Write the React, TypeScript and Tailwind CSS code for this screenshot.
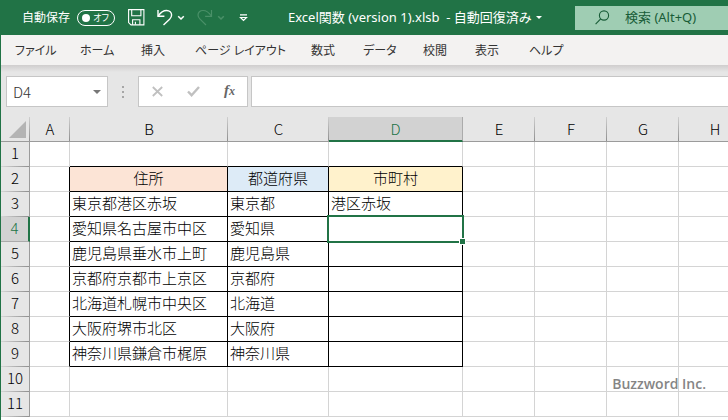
import React from "react";

const TABS = [
  { label: "ファイル", width: "w-[65px]" },
  { label: "ホーム", width: "w-[61px]" },
  { label: "挿入", width: "w-[54px]" },
  { label: "ページ レイアウト", width: "w-[116px]" },
  { label: "数式", width: "w-[52px]" },
  { label: "データ", width: "w-[60px]" },
  { label: "校閲", width: "w-[52px]" },
  { label: "表示", width: "w-[54px]" },
  { label: "ヘルプ", width: "w-[60px]" },
];

const COLUMNS = [
  { name: "A", width: "w-[40px]" },
  { name: "B", width: "w-[158px]" },
  { name: "C", width: "w-[101px]" },
  { name: "D", width: "w-[134px]" },
  { name: "E", width: "w-[72px]" },
  { name: "F", width: "w-[72px]" },
  { name: "G", width: "w-[72px]" },
  { name: "H", width: "w-[72px]" },
];

const DATA: Record<number, Record<string, string>> = {
  2: { B: "住所", C: "都道府県", D: "市町村" },
  3: { B: "東京都港区赤坂", C: "東京都", D: "港区赤坂" },
  4: { B: "愛知県名古屋市中区", C: "愛知県" },
  5: { B: "鹿児島県垂水市上町", C: "鹿児島県" },
  6: { B: "京都府京都市上京区", C: "京都府" },
  7: { B: "北海道札幌市中央区", C: "北海道" },
  8: { B: "大阪府堺市北区", C: "大阪府" },
  9: { B: "神奈川県鎌倉市梶原", C: "神奈川県" },
};

const HEADING_FILL: Record<string, string> = {
  B: "bg-[#fce4d6]",
  C: "bg-[#ddebf7]",
  D: "bg-[#fff2cc]",
};

const ROWS = [1, 2, 3, 4, 5, 6, 7, 8, 9, 10, 11];

function cellClass(row: number, col: string) {
  const inTable = "BCD".includes(col);
  const right =
    row >= 2 && row <= 9 && "ABCD".includes(col)
      ? "border-r-black"
      : "border-r-[#d4d4d4]";
  const bottom =
    inTable && row >= 1 && row <= 9 ? "border-b-black" : "border-b-[#d4d4d4]";
  const heading = row === 2 && inTable ? `text-center ${HEADING_FILL[col]}` : "";
  return `relative h-[25px] border-r border-b p-0 px-0.5 pb-0.5 leading-5 whitespace-nowrap ${right} ${bottom} ${heading}`;
}

function Chevron() {
  return (
    <svg width="8" height="6" viewBox="0 0 8 6" fill="none" stroke="currentColor" strokeWidth="1.5">
      <path d="M1.2 1.2 4 4l2.8-2.8" />
    </svg>
  );
}

function TitleBar() {
  return (
    <header className="flex h-[35px] shrink-0 items-center bg-[#217346] pl-[22px] text-xs text-white">
      <label className="flex items-center gap-[7px]">
        <span>自動保存</span>
        <input type="checkbox" role="switch" className="peer sr-only" />
        <span className="flex h-4 w-[38px] items-center justify-between rounded-full border border-white pr-[5px] pl-1">
          <span className="size-2 rounded-full bg-white" />
          <span className="text-[9px] leading-3 [font-feature-settings:'palt']">オフ</span>
        </span>
      </label>

      <button aria-label="保存" className="ml-[13px]">
        <svg width="17" height="17" viewBox="0 0 17 17" fill="none" stroke="currentColor" strokeWidth="1.1">
          <path d="M.6.6h15.3v15.3H3L.6 13.6z" />
          <path d="M3.7.8v6h9.2v-6M4.6 15.7v-5h7.3v5M7.4 15.5v-2.7" />
        </svg>
      </button>
      <button aria-label="元に戻す" className="ml-3">
        <svg width="16" height="17" viewBox="0 0 16 17" fill="none" stroke="currentColor" strokeWidth="1.4">
          <path d="M1 1v6.3h6.4" />
          <path d="M1.2 7C3.5 3.5 6.3 1.5 9.6 1.5c3 0 5 2 5 4.5 0 1.8-.8 3-2 4.2L6.5 16" />
        </svg>
      </button>
      <button aria-label="元に戻す履歴" className="ml-1">
        <Chevron />
      </button>
      <button aria-label="やり直し" className="ml-3 text-[#4a9068]">
        <svg width="16" height="17" viewBox="0 0 16 17" fill="none" stroke="currentColor" strokeWidth="1.2">
          <path d="M14.5 1v6.3H8.1" />
          <path d="M14.3 7C12 3.5 9.2 1.5 6 1.5c-3 0-5 2-5 4.5 0 1.8.8 3 2 4.2L9 16" />
        </svg>
      </button>
      <button aria-label="やり直し履歴" className="ml-1 text-[#4a9068]">
        <Chevron />
      </button>
      <button aria-label="クイック アクセス ツール バーのカスタマイズ" className="ml-3.5">
        <svg width="9" height="8" viewBox="0 0 9 8" fill="none" stroke="currentColor" strokeWidth="1.2">
          <path d="M1 .8h7M1.5 3.5h6l-3 3z" />
        </svg>
      </button>

      <button className="ml-10 flex items-center gap-1 text-[13px] whitespace-pre [font-feature-settings:'palt']">
        <span>Excel関数 (version 1).xlsb  - 自動回復済み</span>
        <span className="border-x-[3px] border-t-[3px] border-x-transparent border-t-white" />
      </button>

      <label className="ml-auto flex h-6 w-[153px] items-center bg-[#9fcdb3] pl-5 text-[#185c37]">
        <svg width="15" height="15" viewBox="0 0 15 15" fill="none" stroke="currentColor" strokeWidth="1.1">
          <circle cx="9" cy="5.5" r="4.6" />
          <path d="M5.7 8.9.6 14.2" />
        </svg>
        <input
          aria-label="検索"
          placeholder="検索 (Alt+Q)"
          className="ml-[15px] w-[90px] bg-transparent text-[13px] outline-none placeholder:text-[#185c37]"
        />
      </label>
    </header>
  );
}

function FormulaBar() {
  return (
    <div className="flex shrink-0 bg-[#e6e6e6] bg-[linear-gradient(#cfcdcd,#e6e6e6)] bg-[length:100%_7px] bg-no-repeat pt-[11px] pb-2.5 pl-[5px]">
      <div className="flex h-[31px] w-[102px] items-center border border-[#c6c6c6] bg-white">
        <input
          aria-label="名前ボックス"
          defaultValue="D4"
          className="w-[78px] pt-0.5 pl-[6px] text-[15px] font-light text-[#333] outline-none"
        />
        <button aria-label="名前の一覧" className="p-2">
          <span className="block border-x-4 border-t-4 border-x-transparent border-t-[#777]" />
        </button>
      </div>
      <div className="flex w-[30px] flex-col items-center justify-center gap-[3px]">
        <span className="size-0.5 bg-[#a6a6a6]" />
        <span className="size-0.5 bg-[#a6a6a6]" />
        <span className="size-0.5 bg-[#a6a6a6]" />
      </div>
      <div className="flex h-[31px] w-[110px] items-center justify-between border border-[#c6c6c6] bg-white pr-3 pl-[13px]">
        <button aria-label="キャンセル" className="text-[#c0c0c0]">
          <svg width="11" height="11" viewBox="0 0 11 11" fill="none" stroke="currentColor" strokeWidth="1.8">
            <path d="m.8 1 9.4 9M10.2 1 .8 10" />
          </svg>
        </button>
        <button aria-label="入力" className="text-[#c0c0c0]">
          <svg width="13" height="11" viewBox="0 0 13 11" fill="none" stroke="currentColor" strokeWidth="2.4">
            <path d="m1 5.5 3.6 3.7L12 1" />
          </svg>
        </button>
        <button
          aria-label="関数の挿入"
          className="pb-1 font-['Liberation_Serif',serif] text-[15px] leading-5 font-bold text-[#666] italic"
        >
          f<span className="text-xs">x</span>
        </button>
      </div>
      <input
        aria-label="数式バー"
        className="ml-[3px] h-[31px] min-w-0 flex-1 border border-r-0 border-[#c6c6c6] bg-white px-2 outline-none"
      />
    </div>
  );
}

function Sheet() {
  return (
    <div className="relative min-h-0 flex-1 overflow-hidden bg-white">
      <table className="w-[750px] table-fixed border-separate border-spacing-0 text-[15px] font-light text-black">
        <colgroup>
          <col className="w-[29px]" />
          {COLUMNS.map((c) => (
            <col key={c.name} className={c.width} />
          ))}
        </colgroup>
        <thead>
          <tr>
            <th className="h-[25px] border-b border-[#9b9b9b] bg-[#e6e6e6] bg-[linear-gradient(#cfcfcf,#8f8f8f)] bg-[length:1px_100%] bg-right bg-no-repeat p-0">
              <button aria-label="すべて選択" className="ml-2 block">
                <svg width="17" height="17" viewBox="0 0 17 17" fill="#b4b4b4">
                  <path d="M17 0v17H0z" />
                </svg>
              </button>
            </th>
            {COLUMNS.map((c) => (
              <th
                key={c.name}
                scope="col"
                className={
                  c.name === "D"
                    ? "h-[25px] border-r border-b-2 border-r-[#ababab] border-b-[#217346] bg-[#d2d2d2] p-0 leading-5 font-light text-[#217346]"
                    : "h-[25px] border-b border-[#9b9b9b] bg-[#e6e6e6] bg-[linear-gradient(#cfcfcf,#8f8f8f)] bg-[length:1px_100%] bg-right bg-no-repeat p-0 leading-5 font-light"
                }
              >
                {c.name}
              </th>
            ))}
          </tr>
        </thead>
        <tbody>
          {ROWS.map((row) => (
            <tr key={row}>
              <th
                scope="row"
                className={
                  row === 4
                    ? "h-[25px] border-r-2 border-b border-r-[#217346] border-b-[#ababab] bg-[#d2d2d2] p-0 pb-0.5 leading-5 font-light text-[#217346]"
                    : "h-[25px] border-r border-[#9b9b9b] bg-[#e6e6e6] bg-[linear-gradient(to_right,#d6d6d6,#8f8f8f)] bg-[length:100%_1px] bg-bottom bg-no-repeat p-0 pb-[3px] leading-5 font-light"
                }
              >
                {row}
              </th>
              {COLUMNS.map((c) => (
                <td key={c.name} className={cellClass(row, c.name)}>
                  {DATA[row]?.[c.name]}
                  {row === 4 && c.name === "D" && (
                    <span className="absolute -inset-0.5 z-10 border-2 border-[#217346]">
                      <span className="absolute -right-1 -bottom-1 size-[7px] border border-white bg-[#217346]" />
                    </span>
                  )}
                </td>
              ))}
            </tr>
          ))}
        </tbody>
      </table>
      <p className="absolute right-[22px] bottom-[26px] z-20 font-['Open_Sans',sans-serif] text-sm leading-5 font-semibold text-[#858585]">
        Buzzword Inc.
      </p>
    </div>
  );
}

export default function App() {
  return (
    <div className="flex h-screen flex-col overflow-hidden font-['Noto_Sans','Noto_Sans_CJK_JP',sans-serif]">
      <TitleBar />
      <nav className="flex h-[30px] shrink-0 items-center border-l border-[#217346] bg-[#f3f2f1] pt-0.5 pl-3.5 text-xs text-[#333] [font-feature-settings:'palt']">
        {TABS.map((tab) => (
          <button key={tab.label} className={`shrink-0 text-left whitespace-nowrap ${tab.width}`}>
            {tab.label}
          </button>
        ))}
      </nav>
      <main className="flex min-h-0 flex-1 flex-col border-l border-[#217346] font-['Noto_Sans_CJK_JP',sans-serif]">
        <FormulaBar />
        <Sheet />
      </main>
    </div>
  );
}
